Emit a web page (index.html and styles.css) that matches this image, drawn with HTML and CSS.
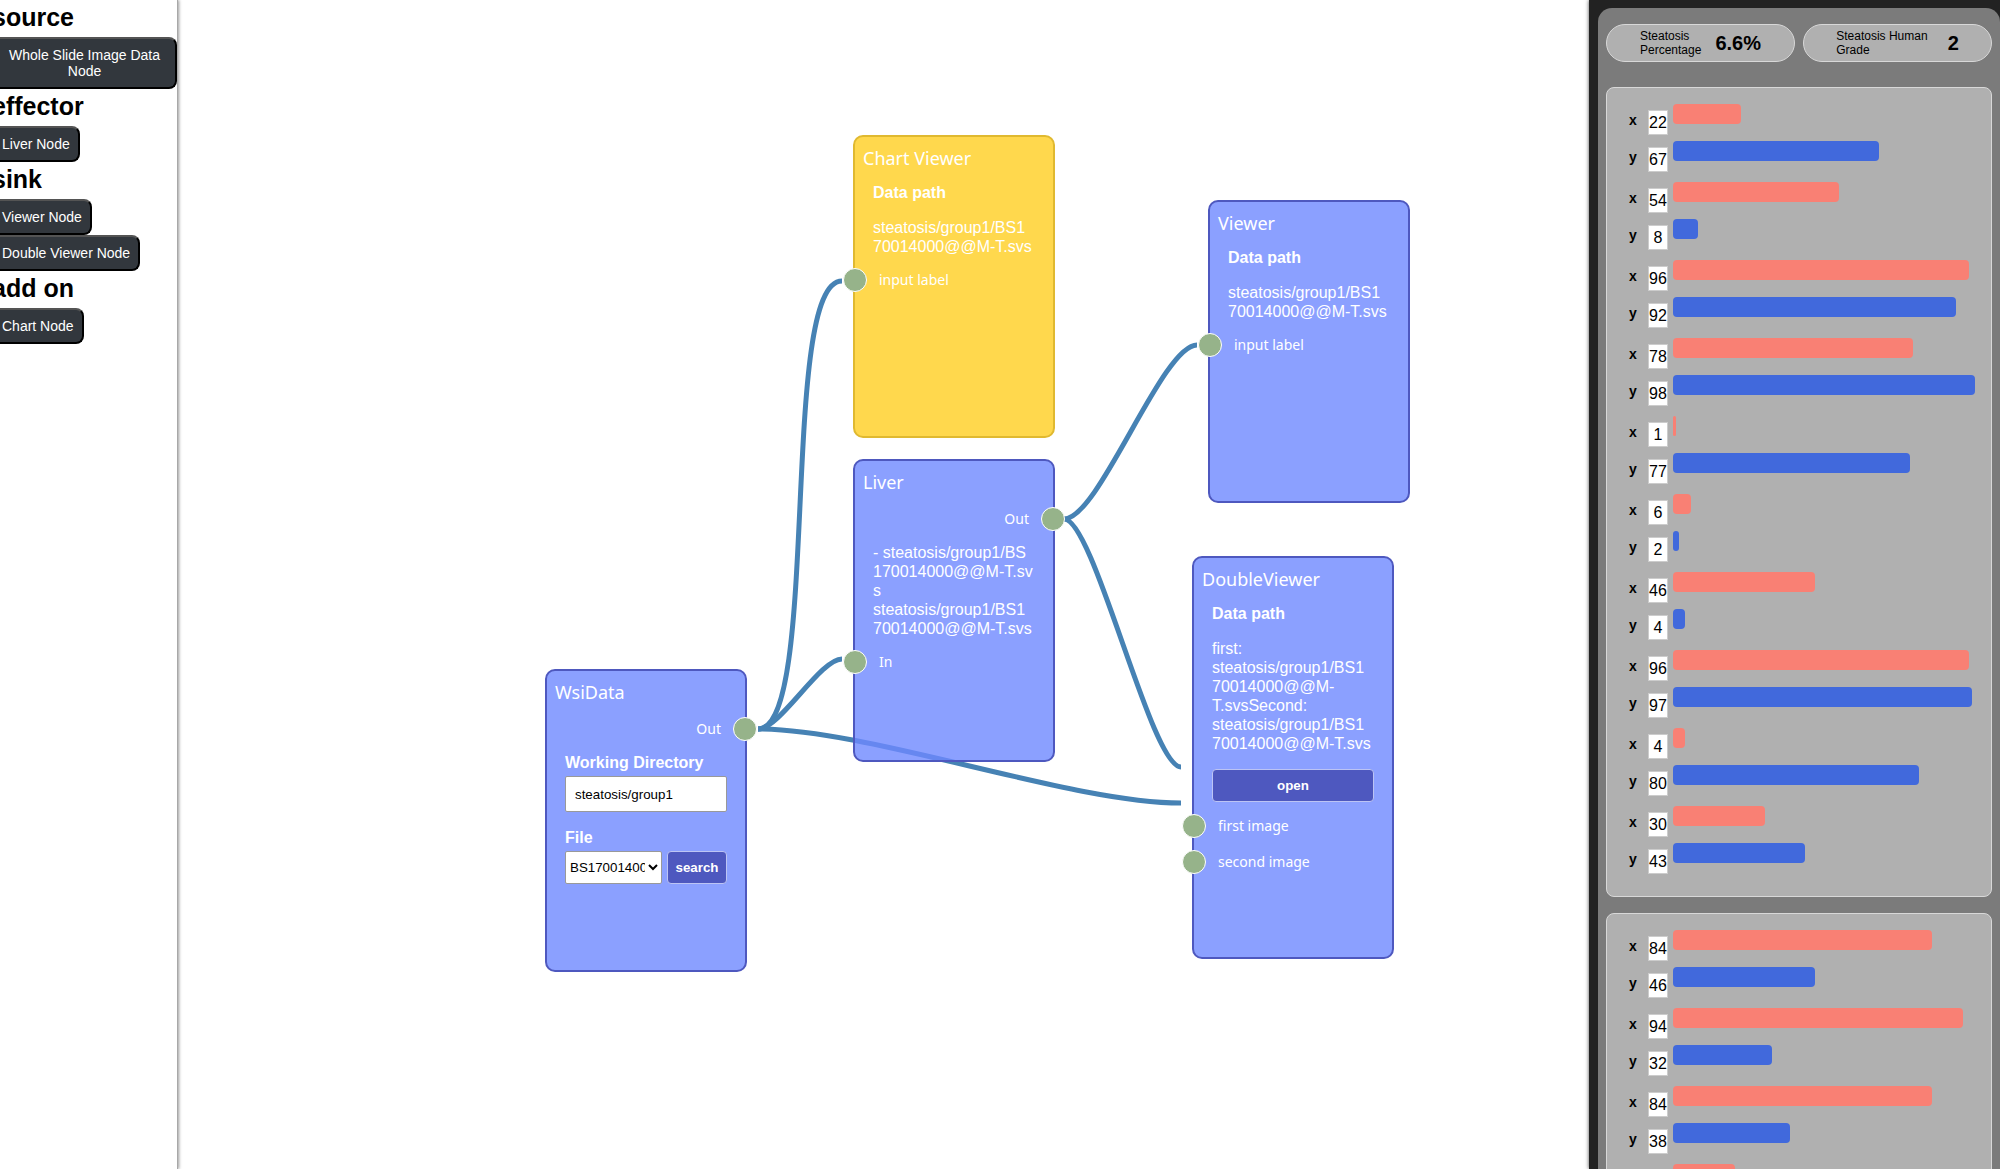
FILE: index.html
```html
<!DOCTYPE html>
<html lang="en">
<head>
<meta charset="utf-8">
<title>Steatosis node editor</title>
<link rel="stylesheet" href="styles.css">
</head>
<body>
<div class="app">
  <aside class="palette">
    <div class="palette-list">
      <h2>source</h2>
      <button type="button">Whole Slide Image Data Node</button>
      <h2>effector</h2>
      <button type="button">Liver Node</button>
      <h2>sink</h2>
      <button type="button">Viewer Node</button>
      <button type="button">Double Viewer Node</button>
      <h2>add on</h2>
      <button type="button">Chart Node</button>
    </div>
  </aside>

  <main class="canvas">
    <svg class="wires" aria-hidden="true">
      <path d="M580 729 C643 729 601 281 664 281"/>
      <path d="M580 729 C602 729 642 659 664 659"/>
      <path d="M580 729 C691 729 892 803 1003 803"/>
      <path d="M886 519 C921 519 984 345 1019 345"/>
      <path d="M886 519 C916 519 973 767 1003 767"/>
    </svg>

    <section class="node node-wsi">
      <h3>WsiData</h3>
      <div class="port port-out"><span>Out</span><i class="socket"></i></div>
      <div class="control">
        <label for="dir">Working Directory</label>
        <input id="dir" class="field" type="text" value="steatosis/group1">
        <label for="file">File</label>
        <div class="picker">
          <select id="file"><option>BS170014000@@M-T.svs</option></select>
          <button type="button">search</button>
        </div>
      </div>
    </section>

    <section class="node node-chart">
      <h3>Chart Viewer</h3>
      <div class="control">
        <strong>Data path</strong>
        <p>steatosis/group1/BS1<br>70014000@@M-T.svs</p>
      </div>
      <div class="port"><i class="socket"></i><span>input label</span></div>
    </section>

    <section class="node node-liver">
      <h3>Liver</h3>
      <div class="port port-out"><span>Out</span><i class="socket"></i></div>
      <div class="control">
        <p>- steatosis/group1/BS<br>170014000@@M-T.sv<br>s<br>steatosis/group1/BS1<br>70014000@@M-T.svs</p>
      </div>
      <div class="port"><i class="socket"></i><span>In</span></div>
    </section>

    <section class="node node-viewer">
      <h3>Viewer</h3>
      <div class="control">
        <strong>Data path</strong>
        <p>steatosis/group1/BS1<br>70014000@@M-T.svs</p>
      </div>
      <div class="port"><i class="socket"></i><span>input label</span></div>
    </section>

    <section class="node node-double">
      <h3>DoubleViewer</h3>
      <div class="control">
        <strong>Data path</strong>
        <p>first:<br>steatosis/group1/BS1<br>70014000@@M-<br>T.svsSecond:<br>steatosis/group1/BS1<br>70014000@@M-T.svs</p>
        <button type="button">open</button>
      </div>
      <div class="port"><i class="socket"></i><span>first image</span></div>
      <div class="port"><i class="socket"></i><span>second image</span></div>
    </section>
  </main>

  <aside class="results">
    <div class="results-body">
      <div class="stats">
        <div class="stat"><span>Steatosis<br>Percentage</span><b>6.6%</b></div>
        <div class="stat stat-wide"><span>Steatosis Human<br>Grade</span><b>2</b></div>
      </div>
      <div class="chart">
        <div class="pair">
          <div class="row"><b>x</b><output>22</output><div class="track"><div class="bar" style="width:22%"></div></div></div>
          <div class="row"><b>y</b><output>67</output><div class="track"><div class="bar bar-y" style="width:67%"></div></div></div>
        </div>
        <div class="pair">
          <div class="row"><b>x</b><output>54</output><div class="track"><div class="bar" style="width:54%"></div></div></div>
          <div class="row"><b>y</b><output>8</output><div class="track"><div class="bar bar-y" style="width:8%"></div></div></div>
        </div>
        <div class="pair">
          <div class="row"><b>x</b><output>96</output><div class="track"><div class="bar" style="width:96%"></div></div></div>
          <div class="row"><b>y</b><output>92</output><div class="track"><div class="bar bar-y" style="width:92%"></div></div></div>
        </div>
        <div class="pair">
          <div class="row"><b>x</b><output>78</output><div class="track"><div class="bar" style="width:78%"></div></div></div>
          <div class="row"><b>y</b><output>98</output><div class="track"><div class="bar bar-y" style="width:98%"></div></div></div>
        </div>
        <div class="pair">
          <div class="row"><b>x</b><output>1</output><div class="track"><div class="bar" style="width:1%"></div></div></div>
          <div class="row"><b>y</b><output>77</output><div class="track"><div class="bar bar-y" style="width:77%"></div></div></div>
        </div>
        <div class="pair">
          <div class="row"><b>x</b><output>6</output><div class="track"><div class="bar" style="width:6%"></div></div></div>
          <div class="row"><b>y</b><output>2</output><div class="track"><div class="bar bar-y" style="width:2%"></div></div></div>
        </div>
        <div class="pair">
          <div class="row"><b>x</b><output>46</output><div class="track"><div class="bar" style="width:46%"></div></div></div>
          <div class="row"><b>y</b><output>4</output><div class="track"><div class="bar bar-y" style="width:4%"></div></div></div>
        </div>
        <div class="pair">
          <div class="row"><b>x</b><output>96</output><div class="track"><div class="bar" style="width:96%"></div></div></div>
          <div class="row"><b>y</b><output>97</output><div class="track"><div class="bar bar-y" style="width:97%"></div></div></div>
        </div>
        <div class="pair">
          <div class="row"><b>x</b><output>4</output><div class="track"><div class="bar" style="width:4%"></div></div></div>
          <div class="row"><b>y</b><output>80</output><div class="track"><div class="bar bar-y" style="width:80%"></div></div></div>
        </div>
        <div class="pair">
          <div class="row"><b>x</b><output>30</output><div class="track"><div class="bar" style="width:30%"></div></div></div>
          <div class="row"><b>y</b><output>43</output><div class="track"><div class="bar bar-y" style="width:43%"></div></div></div>
        </div>
      </div>
      <div class="chart">
        <div class="pair">
          <div class="row"><b>x</b><output>84</output><div class="track"><div class="bar" style="width:84%"></div></div></div>
          <div class="row"><b>y</b><output>46</output><div class="track"><div class="bar bar-y" style="width:46%"></div></div></div>
        </div>
        <div class="pair">
          <div class="row"><b>x</b><output>94</output><div class="track"><div class="bar" style="width:94%"></div></div></div>
          <div class="row"><b>y</b><output>32</output><div class="track"><div class="bar bar-y" style="width:32%"></div></div></div>
        </div>
        <div class="pair">
          <div class="row"><b>x</b><output>84</output><div class="track"><div class="bar" style="width:84%"></div></div></div>
          <div class="row"><b>y</b><output>38</output><div class="track"><div class="bar bar-y" style="width:38%"></div></div></div>
        </div>
        <div class="pair">
          <div class="row"><b>x</b><output>20</output><div class="track"><div class="bar" style="width:20%"></div></div></div>
        </div>
      </div>
    </div>
  </aside>
</div>
</body>
</html>
```
FILE: styles.css
```css
* { box-sizing: border-box; }

body {
  margin: 0;
  background: #fff;
  color: #000;
  font-family: "Liberation Sans", Arial, sans-serif;
  font-size: 16px;
}

button, input, select { font-family: inherit; }

.app {
  display: grid;
  grid-template-columns: 178px 1fr 411px;
  height: 100vh;
  overflow: hidden;
}

/* Left palette */
.palette {
  overflow: hidden;
  border-right: 1px solid #a8a8a8;
  box-shadow: 1px 0 3px rgba(0, 0, 0, 0.4);
}

.palette-list {
  display: flex;
  flex-direction: column;
  align-items: flex-start;
  margin-left: -8px;
}

.palette h2 {
  margin: 0;
  padding-bottom: 2px;
  font-size: 25px;
  line-height: 35px;
}

.palette button {
  padding: 8px;
  border: 2px outset #000;
  border-radius: 8px;
  background: #32373d;
  color: #fff;
  font-size: 14px;
  line-height: 16px;
}

/* Node canvas */
.canvas {
  position: relative;
  overflow: hidden;
}

.wires {
  position: absolute;
  inset: 0;
  width: 100%;
  height: 100%;
  fill: none;
  stroke: steelblue;
  stroke-width: 5px;
}

.node {
  position: absolute;
  width: 202px;
  min-height: 303px;
  border: 2px solid #4e58bf;
  border-radius: 10px;
  background: rgba(110, 136, 255, 0.8);
  color: #fff;
}

.node-wsi { left: 367px; top: 669px; }
.node-chart { left: 675px; top: 135px; background: #ffd84d; border-color: #e0b930; }
.node-liver { left: 675px; top: 459px; }
.node-viewer { left: 1030px; top: 200px; }
.node-double { left: 1014px; top: 556px; min-height: 403px; }

.node h3 {
  margin: 0;
  padding: 9px 8px 7px;
  font: 400 18px/24px "Noto Sans", sans-serif;
}

.port {
  display: flex;
  align-items: center;
  gap: 12px;
  height: 36px;
  margin: 0 -12px;
  font: 400 14px/20px "Noto Sans", sans-serif;
}

.port-out { justify-content: flex-end; }

.socket {
  width: 24px;
  height: 24px;
  border: 1px solid #fff;
  border-radius: 50%;
  background: #96b38a;
}

.control {
  display: flex;
  flex-direction: column;
  padding: 6px 18px;
  line-height: 19px;
}

.control label { font-weight: 700; }
.control p { margin: 0; white-space: nowrap; }
.control strong + p { margin-top: 16px; }
.control p + button { margin-top: 16px; }

.control button {
  height: 33px;
  border: 1px solid #bcc4f4;
  border-radius: 4px;
  background: #4e58bf;
  color: #fff;
  font-weight: 700;
}

.field {
  width: 100%;
  height: 36px;
  margin: 4px 0 16px;
  padding: 0 9px;
  border: 1px solid #999;
  border-radius: 2px;
  background: #fff;
}

.picker {
  display: grid;
  grid-template-columns: 1fr 60px;
  gap: 5px;
  margin-top: 4px;
}

.picker select {
  min-width: 0;
  border: 1px solid #999;
  border-radius: 2px;
  background-color: #fff;
}

.picker button { padding: 0; }

/* Results panel */
.results {
  padding: 8px 0 0 9px;
  overflow: hidden;
  background: #222;
  box-shadow: 0 0 4px rgba(0, 0, 0, 0.7);
}

.results-body {
  display: flex;
  flex-direction: column;
  gap: 16px;
  min-height: 100%;
  padding: 16px 8px;
  border-radius: 14px 14px 0 0;
  background: #7b7b7b;
}

.stats {
  display: grid;
  grid-template-columns: 1fr 1fr;
  gap: 8px;
  margin-bottom: 9px;
}

.stat {
  display: flex;
  align-items: center;
  justify-content: center;
  gap: 14px;
  height: 38px;
  border: 1px solid #d8d8d8;
  border-radius: 19px;
  background: #b0b0b0;
  font-size: 12px;
  line-height: 14px;
}

.stat-wide { gap: 20px; }
.stat b { font-size: 20px; }

.chart {
  display: flex;
  flex-direction: column;
  gap: 4px;
  padding: 16px 10px 16px 16px;
  border: 1px solid #d8d8d8;
  border-radius: 8px;
  background: #b0b0b0;
}

.row {
  display: grid;
  grid-template-columns: 25px 20px 1fr;
  align-items: start;
  height: 37px;
}

.row b {
  padding: 7px 0 0 6px;
  font-size: 14px;
  line-height: 18px;
}

.row output {
  height: 25px;
  margin-top: 6px;
  border: 1px solid #ccc;
  background: #fff;
  line-height: 23px;
  text-align: center;
}

.track { margin-left: 5px; }

.bar {
  height: 20px;
  border-radius: 4px;
  background: #f98074;
}

.bar-y { background: #4169dc; }
```
